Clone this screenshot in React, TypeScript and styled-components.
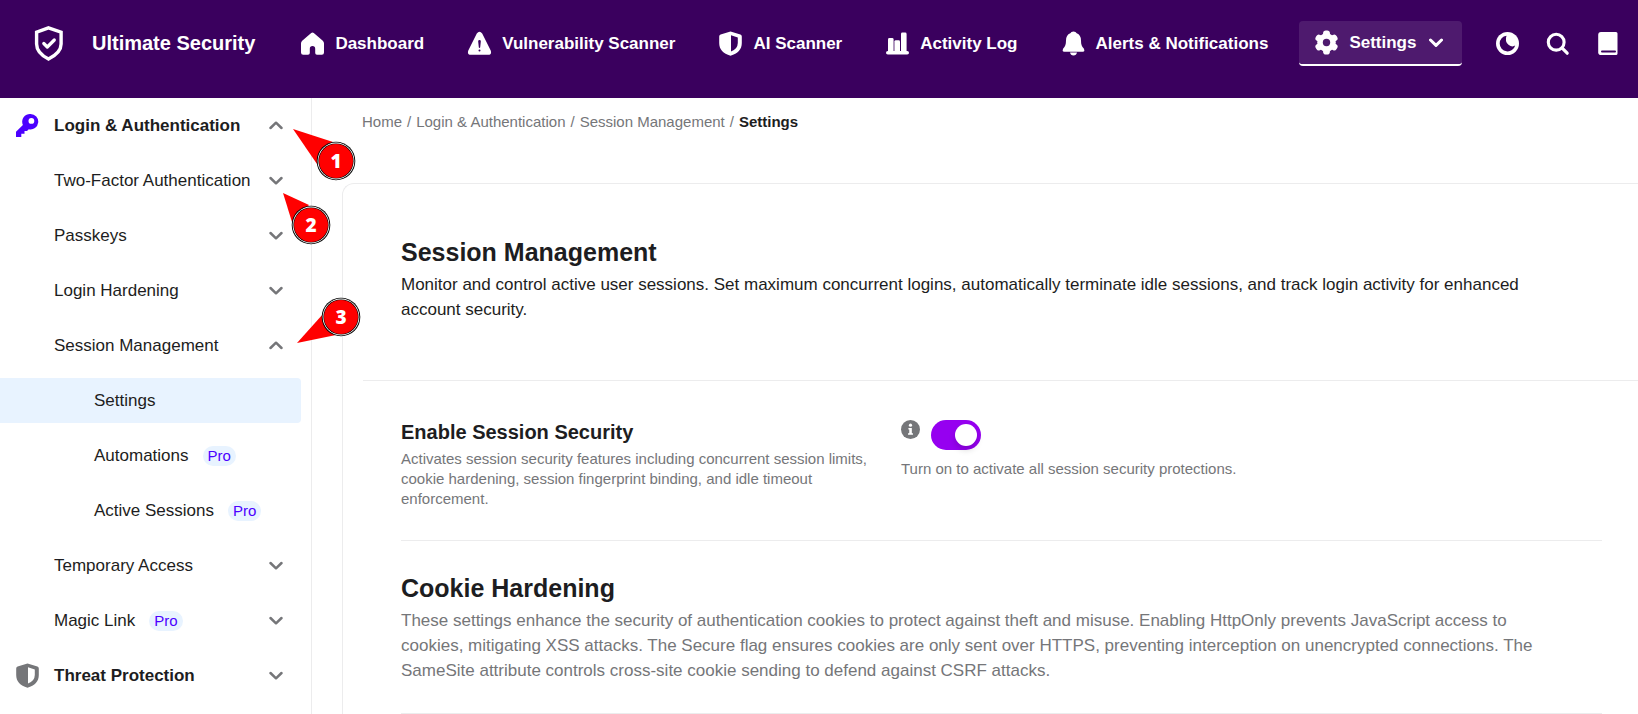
import React from "react";
import styled, { createGlobalStyle } from "styled-components";

const color = {
  header: "#3a005e",
  headerActive: "#4e1a6e",
  ink: "#1d1d21",
  muted: "#757679",
  line: "#ececed",
  accent: "#4b00ff",
  tint: "#e8f3ff",
  toggle: "#9600f0",
  callout: "#ff0000",
};

const GlobalStyle = createGlobalStyle`
  *, *::before, *::after { box-sizing: border-box; }
  body {
    margin: 0;
    background: #fff;
    color: ${color.ink};
    font-family: "Liberation Sans", Arial, sans-serif;
    font-size: 17px;
  }
  button { font: inherit; color: inherit; border: 0; background: none; }
  a { color: inherit; text-decoration: none; }
  h1, h2, h3, p, ul, ol { margin: 0; padding: 0; }
  ul, ol { list-style: none; }
`;

const Page = styled.div`
  display: flex;
  flex-direction: column;
  min-height: 100vh;
  overflow-x: hidden;
`;

/* ---------- header ---------- */

const Header = styled.header`
  display: flex;
  align-items: flex-start;
  height: 98px;
  padding: 21px 18px 0 34px;
  background: ${color.header};
  color: #fff;
  white-space: nowrap;
`;

const Brand = styled.a`
  display: flex;
  align-items: center;
  gap: 27px;
  height: 44px;
  margin-right: 45px;
  font-size: 20px;
  line-height: 24px;
  font-weight: 700;
`;

const Nav = styled.nav`
  display: flex;
  gap: 43px;
  flex: 1;
`;

const NavLink = styled.a`
  display: flex;
  align-items: center;
  gap: 10px;
  height: 45px;
  font-weight: 700;
`;

const SettingsButton = styled.button`
  display: flex;
  align-items: center;
  gap: 10px;
  height: 45px;
  margin-left: -12px;
  padding: 0 19px 0 15px;
  border-bottom: 2px solid #fff;
  border-radius: 4px;
  background: ${color.headerActive};
  font-weight: 700;
  cursor: pointer;
`;

const SettingsLabel = styled.span`
  margin-right: 3px;
`;

const Tools = styled.div`
  display: flex;
  align-items: center;
  gap: 25px;
  height: 45px;
`;

const ToolButton = styled.button`
  display: flex;
  padding: 0;
  cursor: pointer;
`;

const Icon = styled.svg<{ $size?: number }>`
  flex: none;
  display: block;
  width: ${(p) => p.$size ?? 25}px;
  height: ${(p) => p.$size ?? 25}px;
  fill: currentColor;
`;

const Logo = styled.svg`
  flex: none;
  width: 31px;
  height: 37px;
  fill: none;
  stroke: currentColor;
`;

/* ---------- layout ---------- */

const Body = styled.div`
  display: flex;
  flex: 1;
`;

const Sidebar = styled.nav`
  flex: none;
  width: 312px;
  padding: 5px 10px 5px 0;
  border-right: 1px solid ${color.line};
`;

const Menu = styled.ul`
  display: flex;
  flex-direction: column;
  gap: 10px;
`;

const MenuItem = styled.li`
  position: relative;
`;

const rowStyle = `
  display: flex;
  align-items: center;
  width: 100%;
  height: 45px;
  text-align: left;
  white-space: nowrap;
  cursor: pointer;
`;

const GroupRow = styled.button<{ $top?: boolean }>`
  ${rowStyle}
  gap: 14px;
  padding: 0 18px 0 ${(p) => (p.$top ? 15 : 54)}px;
  font-weight: ${(p) => (p.$top ? 700 : 400)};
`;

const LeafRow = styled.a<{ $active?: boolean }>`
  ${rowStyle}
  padding: 0 18px 0 94px;
  border-radius: 0 4px 4px 0;
  background: ${(p) => (p.$active ? color.tint : "transparent")};
`;

const RowLabel = styled.span`
  flex: 1;
  display: flex;
  align-items: center;
  gap: 14px;
`;

const ProBadge = styled.span`
  padding: 0 5px;
  border-radius: 10px;
  background: ${color.tint};
  color: ${color.accent};
  font-size: 15px;
  line-height: 20px;
  font-weight: 400;
`;

const ChevronMark = styled.svg<{ $tone: string }>`
  flex: none;
  width: 14px;
  height: 9px;
  fill: none;
  stroke: ${(p) => p.$tone};
  stroke-linecap: round;
  stroke-linejoin: round;
`;

/* ---------- content ---------- */

const Main = styled.main`
  flex: 1;
  min-width: 0;
  display: flex;
  flex-direction: column;
  padding-left: 30px;
`;

const Crumbs = styled.ol`
  display: flex;
  gap: 5px;
  padding: 14px 20px 51px;
  color: ${color.muted};
  font-size: 15px;
  line-height: 20px;
`;

const Crumb = styled.li`
  display: flex;
  gap: 5px;
  &:not(:last-child)::after { content: "/"; }
  [aria-current] { color: ${color.ink}; font-weight: 700; }
`;

const Card = styled.div`
  flex: 1;
  border: solid ${color.line};
  border-width: 1px 0 0 1px;
  border-top-left-radius: 12px;
`;

const Intro = styled.header`
  margin-left: 20px;
  padding: 53px 36px 58px 38px;
  border-bottom: 1px solid ${color.line};
`;

const Title = styled.h2`
  font-size: 25px;
  line-height: 30px;
  font-weight: 700;
`;

const Text = styled.p<{ $muted?: boolean }>`
  margin-top: 5px;
  padding-right: 50px;
  line-height: 25px;
  color: ${(p) => (p.$muted ? color.muted : color.ink)};
`;

const Sections = styled.div`
  padding: 0 36px 0 58px;
`;

const Setting = styled.section`
  display: grid;
  grid-template-columns: 476px 1fr;
  column-gap: 24px;
  padding: 39px 0 31px;
  border-bottom: 1px solid ${color.line};
`;

const SettingTitle = styled.h3`
  margin-bottom: 4px;
  font-size: 20px;
  line-height: 25px;
  font-weight: 700;
`;

const Note = styled.p`
  color: ${color.muted};
  font-size: 15px;
  line-height: 20px;
`;

const ToggleRow = styled.div`
  display: flex;
  align-items: flex-start;
  gap: 11px;
  margin-bottom: 9px;
`;

const Toggle = styled.input`
  appearance: none;
  display: block;
  width: 50px;
  height: 30px;
  margin: 0;
  padding: 4px;
  border-radius: 15px;
  background: #b9b9bd;
  cursor: pointer;
  &::before {
    content: "";
    display: block;
    width: 22px;
    height: 22px;
    border-radius: 50%;
    background: #fff;
    box-shadow: 0 4px 6px rgba(0, 0, 0, 0.15);
  }
  &:checked { background: ${color.toggle}; }
  &:checked::before { margin-left: auto; }
`;

const Block = styled.section`
  padding: 32px 0 30px;
  border-bottom: 1px solid ${color.line};
`;

/* ---------- numbered callouts ---------- */

const CalloutBox = styled.span`
  position: absolute;
  z-index: 2;
  display: flex;
  align-items: center;
  justify-content: center;
  width: 38px;
  height: 38px;
  color: #fff;
  font-family: "Open Sans", sans-serif;
  font-size: 19px;
  line-height: 24px;
  font-weight: 800;
  pointer-events: none;
`;

const CalloutShape = styled.svg`
  position: absolute;
  inset: 0;
  width: 100%;
  height: 100%;
  overflow: visible;
`;

const CalloutNumber = styled.span`
  position: relative;
`;

const FirstCallout = styled(CalloutBox)`left: 317px; top: 39px;`;
const SecondCallout = styled(CalloutBox)`left: 292px; top: 48px;`;
const ThirdCallout = styled(CalloutBox)`left: 322px; top: -25px;`;

const calloutBoxes = { 1: FirstCallout, 2: SecondCallout, 3: ThirdCallout };
const calloutTails = {
  1: "-43,-32 -3,-19 -19,3",
  2: "-28,-32 -2,-20 -19,-3",
  3: "-44,26 -18,-3 -5,18",
};

type CalloutId = 1 | 2 | 3;

function Callout({ n }: { n: CalloutId }) {
  const Box = calloutBoxes[n];
  return (
    <Box>
      <CalloutShape viewBox="-19 -19 38 38" aria-hidden="true">
        <polygon points={calloutTails[n]} fill={color.callout} />
        <circle r="19.300" fill="#000" />
        <circle r="18.400" fill="#fff" />
        <circle r="17.600" fill="#000" />
        <circle r="17" fill={color.callout} />
      </CalloutShape>
      <CalloutNumber>{n}</CalloutNumber>
    </Box>
  );
}

/* ---------- icons ---------- */

const LogoIcon = () => (
  <Logo viewBox="0 0 31 37" aria-hidden="true">
    <path d="M14.500 2.900 27.100 7.200V19c0 6.500-4.600 11-12.600 15C6.500 30 2.600 25.500 2.600 19V7.200Z" strokeWidth="3.400" />
    <path d="m9.800 18.500 3.500 3.500 7-7" strokeWidth="3.200" strokeLinecap="round" strokeLinejoin="round" />
  </Logo>
);

const HomeIcon = () => (
  <Icon viewBox="0 0 25 25" aria-hidden="true">
    <path d="M11.200 2.100q1.300-1 2.600 0l9 7.700q1.200 1 1.200 2.600v9.100q0 2.200-2.200 2.200H17q-1.800 0-1.800-1.800v-4.200q0-2.600-2.700-2.600t-2.700 2.600v4.200q0 1.800-1.800 1.800H3.200Q1 23.700 1 21.500v-9.100q0-1.600 1.200-2.600Z" />
  </Icon>
);

const WarningIcon = () => (
  <Icon viewBox="0 0 25 25" aria-hidden="true">
    <path
      fillRule="evenodd"
      d="M9.800 2.500q2.700-3.600 5.400 0l8.500 17q1.400 4.200-2.500 4.200H3.800q-3.900 0-2.500-4.200ZM12.500 9q-1.400 0-1.300 1.500l.6 5.700q.1.700.7.700t.7-.7l.6-5.700q.1-1.500-1.300-1.500Zm0 9.400a1 1 0 1 0 0 2 1 1 0 0 0 0-2Z"
    />
  </Icon>
);

const ShieldHalfIcon = () => (
  <Icon viewBox="0 0 25 25" aria-hidden="true">
    <path
      fillRule="evenodd"
      d="M12.500.5 22.400 3.500q1.400.5 1.400 2V12c0 6.500-4 10.500-11.300 12.700C5.200 22.500 1.200 18.500 1.200 12V5.500q0-1.500 1.400-2ZM13 4.300v16.200q6.600-2.300 6.800-8.500V6.400Z"
    />
  </Icon>
);

const ChartIcon = () => (
  <Icon viewBox="0 0 25 25" aria-hidden="true">
    <rect x="1" y="20" width="23" height="3.600" rx="1.800" />
    <rect x="3" y="7" width="5.600" height="15" rx="1.400" />
    <rect x="9.400" y="9.200" width="5.600" height="13" rx="1.400" />
    <rect x="16" y="1.500" width="5.600" height="21" rx="1.400" />
  </Icon>
);

const BellIcon = () => (
  <Icon viewBox="0 0 25 25" aria-hidden="true">
    <path d="M12.500.5q2.400 0 3.200 1.800 4.300 1.700 4.300 7.200c0 4 .8 6 2.800 8q1.500 3.200-1 3.200H3.200q-2.500 0-1-3.200c2-2 2.800-4 2.800-8q0-5.500 4.300-7.200Q10.100.5 12.500.5ZM9 21.600h7q-.6 3-3.500 3T9 21.600Z" />
  </Icon>
);

const GearIcon = () => (
  <Icon viewBox="0 0 25 25" aria-hidden="true">
    <circle cx="12.500" cy="12.500" r="9.300" />
    {[0, 60, 120].map((a) => (
      <rect key={a} x="9.100" y="0.500" width="6.800" height="24" rx="2.800" transform={`rotate(${a} 12.500 12.500)`} />
    ))}
    <circle cx="12.500" cy="12.500" r="3.700" fill={color.headerActive} />
  </Icon>
);

const ThemeIcon = () => (
  <Icon viewBox="0 0 25 25" aria-hidden="true">
    <circle cx="12.500" cy="12.500" r="11.500" />
    <path d="M11.500 4.700A7.900 7.900 0 1 0 20.200 14.600Q17 16.500 13.500 13.800 9.500 10.500 11.500 4.700Z" fill={color.header} />
  </Icon>
);

const SearchIcon = () => (
  <Icon viewBox="0 0 25 25" aria-hidden="true">
    <circle cx="11.200" cy="11.200" r="7.900" fill="none" stroke="currentColor" strokeWidth="3.100" />
    <path d="m17.200 17.200 5 5" stroke="currentColor" strokeWidth="3.200" strokeLinecap="round" />
  </Icon>
);

const BookIcon = () => (
  <Icon viewBox="0 0 25 25" aria-hidden="true">
    <path d="M6 1h15q1.500 0 1.500 1.500v20q0 1.500-1.500 1.500H6q-2.800 0-2.800-2.800V4Q3.200 1 6 1Z" />
    <path d="M7 20.500h13" stroke={color.header} strokeWidth="2" strokeLinecap="round" />
  </Icon>
);

const KeyIcon = () => (
  <Icon viewBox="0 0 25 25" aria-hidden="true" color={color.accent}>
    <path
      fillRule="evenodd"
      d="M15.500 1a7.700 7.700 0 1 1-1.700 15.200L12 18H9.500v2.700H6.300V24H1v-5.200l6.900-6.900A7.700 7.700 0 0 1 15.500 1Zm.9 4a2.900 2.900 0 1 0 0 5.800 2.900 2.900 0 0 0 0-5.800Z"
    />
  </Icon>
);

const InfoIcon = () => (
  <Icon $size={19} viewBox="0 0 20 20" color={color.muted} role="img" aria-label="More information">
    <circle cx="10" cy="10" r="10" />
    <circle cx="10" cy="5.500" r="1.700" fill="#fff" />
    <path d="M7.800 8.500h3.600v5.500h1.200v1.500H7.400V14h1.300v-4h-.9Z" fill="#fff" />
  </Icon>
);

function Chevron({ up = false, tone = color.muted, weight = 2.5 }: { up?: boolean; tone?: string; weight?: number }) {
  return (
    <ChevronMark $tone={tone} strokeWidth={weight} viewBox="0 0 14 9" aria-hidden="true">
      <path d={up ? "M1.500 7 7 1.700 12.500 7" : "M1.500 2 7 7.300 12.500 2"} />
    </ChevronMark>
  );
}

/* ---------- data ---------- */

const navItems = [
  { label: "Dashboard", icon: <HomeIcon /> },
  { label: "Vulnerability Scanner", icon: <WarningIcon /> },
  { label: "AI Scanner", icon: <ShieldHalfIcon /> },
  { label: "Activity Log", icon: <ChartIcon /> },
  { label: "Alerts & Notifications", icon: <BellIcon /> },
];

type MenuEntry = {
  label: string;
  kind: "top" | "group" | "leaf";
  icon?: React.ReactNode;
  open?: boolean;
  pro?: boolean;
  active?: boolean;
  callout?: CalloutId;
};

const menu: MenuEntry[] = [
  { label: "Login & Authentication", kind: "top", icon: <KeyIcon />, open: true, callout: 1 },
  { label: "Two-Factor Authentication", kind: "group", callout: 2 },
  { label: "Passkeys", kind: "group" },
  { label: "Login Hardening", kind: "group" },
  { label: "Session Management", kind: "group", open: true, callout: 3 },
  { label: "Settings", kind: "leaf", active: true },
  { label: "Automations", kind: "leaf", pro: true },
  { label: "Active Sessions", kind: "leaf", pro: true },
  { label: "Temporary Access", kind: "group" },
  { label: "Magic Link", kind: "group", pro: true },
  { label: "Threat Protection", kind: "top", icon: <ShieldHalfIcon /> },
];

const TopIcon = styled.span`
  color: ${color.muted};
`;

function MenuRow({ entry }: { entry: MenuEntry }) {
  const label = (
    <RowLabel>
      {entry.label}
      {entry.pro && <ProBadge>Pro</ProBadge>}
    </RowLabel>
  );
  return (
    <MenuItem>
      {entry.kind === "leaf" ? (
        <LeafRow href="#" $active={entry.active} aria-current={entry.active ? "page" : undefined}>
          {label}
        </LeafRow>
      ) : (
        <GroupRow type="button" $top={entry.kind === "top"} aria-expanded={!!entry.open}>
          {entry.icon && <TopIcon>{entry.icon}</TopIcon>}
          {label}
          <Chevron up={entry.open} />
        </GroupRow>
      )}
      {entry.callout && <Callout n={entry.callout} />}
    </MenuItem>
  );
}

export default function App() {
  return (
    <Page>
      <GlobalStyle />
      <Header>
        <Brand href="#">
          <LogoIcon />
          Ultimate Security
        </Brand>
        <Nav aria-label="Main">
          {navItems.map((item) => (
            <NavLink key={item.label} href="#">
              {item.icon}
              {item.label}
            </NavLink>
          ))}
          <SettingsButton type="button" aria-haspopup="menu">
            <GearIcon />
            <SettingsLabel>Settings</SettingsLabel>
            <Chevron tone="#fff" weight={3} />
          </SettingsButton>
        </Nav>
        <Tools>
          <ToolButton type="button" aria-label="Toggle theme"><ThemeIcon /></ToolButton>
          <ToolButton type="button" aria-label="Search"><SearchIcon /></ToolButton>
          <ToolButton type="button" aria-label="Documentation"><BookIcon /></ToolButton>
        </Tools>
      </Header>
      <Body>
        <Sidebar aria-label="Settings sections">
          <Menu>
            {menu.map((entry) => (
              <MenuRow key={entry.label} entry={entry} />
            ))}
          </Menu>
        </Sidebar>
        <Main>
          <Crumbs aria-label="Breadcrumb">
            <Crumb><a href="#">Home</a></Crumb>
            <Crumb><a href="#">Login &amp; Authentication</a></Crumb>
            <Crumb><a href="#">Session Management</a></Crumb>
            <Crumb><span aria-current="page">Settings</span></Crumb>
          </Crumbs>
          <Card>
            <Intro>
              <Title>Session Management</Title>
              <Text>
                Monitor and control active user sessions. Set maximum concurrent logins, automatically terminate idle
                sessions, and track login activity for enhanced account security.
              </Text>
            </Intro>
            <Sections>
              <Setting>
                <div>
                  <SettingTitle id="session-security">Enable Session Security</SettingTitle>
                  <Note>
                    Activates session security features including concurrent session limits, cookie hardening, session
                    fingerprint binding, and idle timeout enforcement.
                  </Note>
                </div>
                <div>
                  <ToggleRow>
                    <InfoIcon />
                    <Toggle type="checkbox" role="switch" defaultChecked aria-labelledby="session-security" />
                  </ToggleRow>
                  <Note>Turn on to activate all session security protections.</Note>
                </div>
              </Setting>
              <Block>
                <Title>Cookie Hardening</Title>
                <Text $muted>
                  These settings enhance the security of authentication cookies to protect against theft and misuse.
                  Enabling HttpOnly prevents JavaScript access to cookies, mitigating XSS attacks. The Secure flag
                  ensures cookies are only sent over HTTPS, preventing interception on unencrypted connections. The
                  SameSite attribute controls cross-site cookie sending to defend against CSRF attacks.
                </Text>
              </Block>
            </Sections>
          </Card>
        </Main>
      </Body>
    </Page>
  );
}
